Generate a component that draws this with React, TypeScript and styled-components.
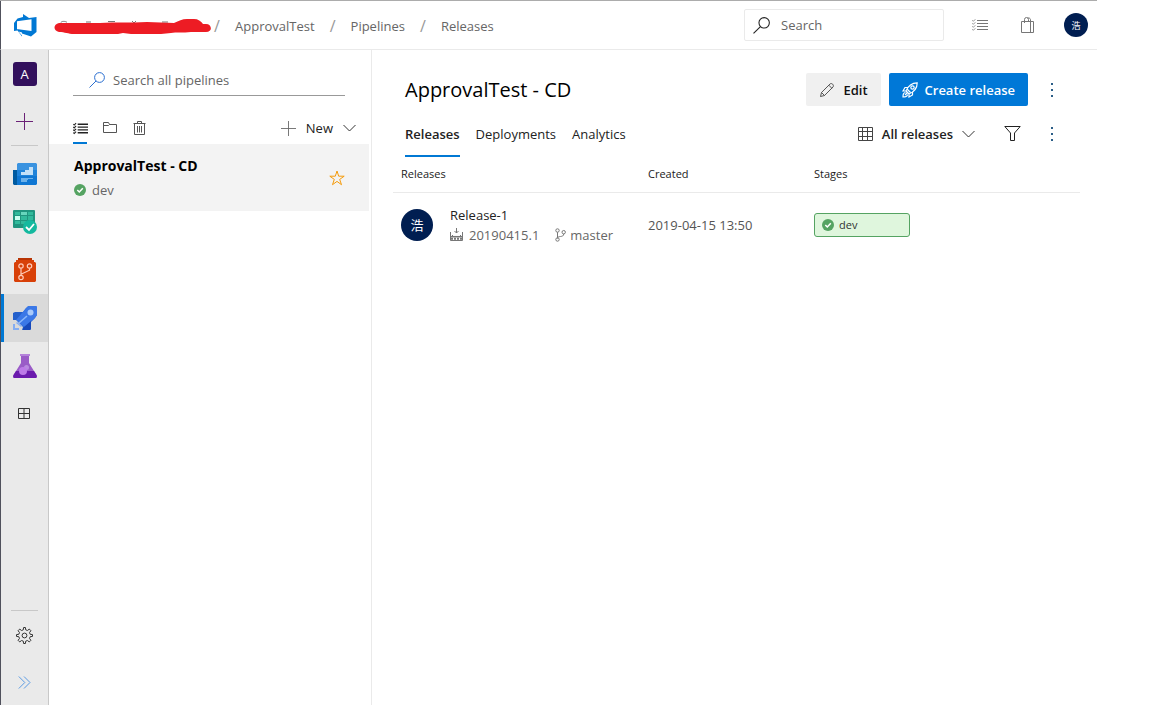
import React from 'react';
import styled, { createGlobalStyle, css } from 'styled-components';

const GlobalStyle = createGlobalStyle`
  *, *::before, *::after { box-sizing: border-box; }
  body { margin: 0; background: #fff; }
  body, button, input, table {
    font-family: "Open Sans", "Noto Sans", "Noto Sans CJK SC", sans-serif;
    font-size: 13px;
    line-height: 20px;
    color: #222;
  }
  button { border: 0; padding: 0; background: none; cursor: pointer; }
  svg { display: block; flex: none; }
  a { color: inherit; text-decoration: none; }
  h1, h2, p, ul, ol { margin: 0; padding: 0; list-style: none; }
`;

const Page = styled.div`
  display: flex;
  flex-direction: column;
  min-height: 100vh;
  margin-right: 55px;
  border-top: 1px solid #acacac;
`;

const TopBar = styled.header`
  display: flex;
  align-items: center;
  height: 49px;
  padding: 0 9px 0 13px;
  border-left: 1px solid #50515c;
  border-bottom: 1px solid #eaeaea;
`;

const Breadcrumbs = styled.ol`
  display: flex;
  flex: 1;
  align-items: center;
  margin-left: 17px;
  padding-top: 2px;
  color: #666;
`;

const Crumb = styled.li`
  display: flex;
  align-items: center;
`;

const Slash = styled.span`
  width: 36px;
  text-align: center;
  font-size: 16px;
  color: #999;
`;

const HiddenName = styled.a`
  margin-right: -13px;
`;

const GlobalSearch = styled.label`
  display: flex;
  align-items: center;
  gap: 11px;
  width: 200px;
  height: 32px;
  margin-right: 12px;
  padding: 0 8px;
  border: 1px solid #eaeaea;
  border-radius: 2px;
`;

const SearchInput = styled.input`
  flex: 1;
  min-width: 0;
  padding: 0;
  border: 0;
  outline: 0;
  background: none;
  &::placeholder { color: #666; opacity: 1; }
`;

const IconButton = styled.button<{ $width?: number }>`
  display: flex;
  align-items: center;
  justify-content: center;
  width: ${(p) => p.$width ?? 32}px;
  height: 32px;
`;

const Avatar = styled.span<{ $size: number }>`
  display: flex;
  flex: none;
  align-items: center;
  justify-content: center;
  width: ${(p) => p.$size}px;
  height: ${(p) => p.$size}px;
  border-radius: 50%;
  background: #001e51;
  color: #fff;
  font-family: "Noto Sans CJK SC", sans-serif;
  font-size: ${(p) => (p.$size > 24 ? 13 : 9)}px;
  line-height: 1;
`;

const ProfileButton = styled.button`
  margin-left: 12px;
`;

const Body = styled.div`
  display: flex;
  flex: 1;
`;

const SideBar = styled.nav`
  display: flex;
  flex: none;
  flex-direction: column;
  align-items: stretch;
  width: 49px;
  border-left: 1px solid #50515c;
  border-right: 1px solid #c8c8c8;
  background: #eaeaea;
`;

const SideItem = styled.a<{ $active?: boolean; $height?: number }>`
  display: flex;
  align-items: center;
  justify-content: center;
  height: ${(p) => p.$height ?? 48}px;
  ${(p) =>
    p.$active &&
    css`
      background: #dadada;
      box-shadow: inset 3px 0 #0078d4;
    `}
`;

const SideRule = styled.hr<{ $bottom?: boolean }>`
  width: 27px;
  height: 1px;
  margin: ${(p) => (p.$bottom ? 'auto 10px 0' : '0 10px 4px')};
  border: 0;
  background: #c8c8c8;
`;

const ProjectTile = styled.span`
  width: 24px;
  height: 24px;
  border-radius: 3px;
  background: #32105c;
  color: #fff;
  line-height: 24px;
  text-align: center;
`;

const ListPane = styled.section`
  flex: none;
  width: 323px;
  border-right: 1px solid #eaeaea;
`;

const PipelineSearch = styled.label`
  display: flex;
  align-items: center;
  gap: 8px;
  height: 32px;
  margin: 14px 26px 16px 24px;
  padding-left: 16px;
  border-bottom: 1px solid #999;
`;

const ListTools = styled.div`
  display: flex;
  gap: 16px;
  height: 32px;
  padding: 0 15px 0 24px;
`;

const ViewButton = styled.button<{ $active?: boolean }>`
  display: flex;
  align-items: center;
  width: 14px;
  box-shadow: ${(p) => (p.$active ? 'inset 0 -2px #0078d4' : 'none')};
`;

const NewButton = styled.button`
  display: flex;
  align-items: center;
  gap: 10px;
  margin-left: auto;
  font-weight: 500;
`;

const PipelineItem = styled.article`
  display: flex;
  align-items: center;
  justify-content: space-between;
  height: 67px;
  margin-right: 2px;
  padding: 0 24px 0 25px;
  background: #f3f3f3;
`;

const PipelineName = styled.h2`
  font-size: 14px;
  font-weight: 700;
  line-height: 24px;
  color: #000;
`;

const StatusLine = styled.p`
  display: flex;
  align-items: center;
  gap: 6px;
  line-height: 24px;
  color: #666;
`;

const Main = styled.main`
  flex: 1;
  min-width: 0;
  padding: 23px 17px 0 21px;
`;

const TitleRow = styled.div`
  display: flex;
  align-items: center;
  gap: 8px;
  height: 33px;
  padding: 0 12px;
`;

const Title = styled.h1`
  flex: 1;
  font-size: 20px;
  font-weight: 500;
  line-height: 32px;
  color: #000;
`;

const ActionButton = styled.button<{ $primary?: boolean }>`
  display: flex;
  align-items: center;
  gap: ${(p) => (p.$primary ? 7 : 8)}px;
  height: 33px;
  padding: 0 13px;
  border-radius: 2px;
  font-weight: 600;
  color: ${(p) => (p.$primary ? '#fff' : '#111')};
  background: ${(p) => (p.$primary ? '#0078d7' : '#f0f0f0')};
`;

const TabRow = styled.div`
  display: flex;
  align-items: center;
  gap: 8px;
  height: 45px;
  margin-top: 6px;
  padding: 0 12px 2px;
`;

const Tabs = styled.div`
  display: flex;
  flex: 1;
  align-self: flex-start;
  gap: 16px;
  height: 45px;
`;

const Tab = styled.button<{ $active?: boolean }>`
  padding-bottom: 2px;
  font-weight: ${(p) => (p.$active ? 600 : 400)};
  box-shadow: ${(p) => (p.$active ? 'inset 0 -2px #0078d4' : 'none')};
`;

const FilterButton = styled.button`
  display: flex;
  align-items: center;
  gap: 9px;
  padding-right: 13px;
  font-weight: 600;
`;

const ReleaseTable = styled.table`
  width: 100%;
  table-layout: fixed;
  border-collapse: separate;
  border-spacing: 0;
`;

const HeadCell = styled.th<{ $width?: number }>`
  width: ${(p) => (p.$width ? `${p.$width}px` : 'auto')};
  height: 36px;
  padding: 0 8px 2px;
  border-bottom: 1px solid #eaeaea;
  font-size: 11px;
  font-weight: 400;
  line-height: 16px;
  text-align: left;
`;

const Cell = styled.td`
  height: 63px;
  padding: 0 8px;
  color: #555;
`;

const ReleaseInfo = styled.div`
  display: flex;
  align-items: center;
  gap: 17px;
`;

const ReleaseName = styled.a`
  display: block;
  color: #222;
`;

const ReleaseMeta = styled.div`
  display: flex;
  gap: 16px;
  color: #666;
`;

const MetaItem = styled.span<{ $gap: number }>`
  display: flex;
  align-items: center;
  gap: ${(p) => p.$gap}px;
`;

const StageBadge = styled.a`
  display: flex;
  align-items: center;
  gap: 5px;
  width: 96px;
  height: 24px;
  padding: 0 7px;
  border: 1px solid #55a362;
  border-radius: 3px;
  background: #dff6dd;
  font-size: 11px;
  color: #333;
`;

const DevOpsLogo = () => (
  <svg width="23" height="23" viewBox="0 0 23 23">
    <path fill="#0078d4" d="M0 9 3.500 4.500 9 3V0l6 4 7.500-1V18L17 22.500l-9-3v3L3.500 16.500 0 17Z" />
    <path fill="#fff" d="M3 7.200 17.500 5.300V17L4.300 15.200H3ZM4.500 17.500 8 18.500v3Z" />
  </svg>
);

const Scribble = () => (
  <svg width="158" height="15" viewBox="0 0 158 15" role="img" aria-label="Organization">
    <path d="M7 3.500C7 2 12 2 13 3.500M32 3h5M54 2.500h7M78 2l2 2 2-2M108 3h6" fill="none" stroke="#777" />
    <path
      fill="#ed1c24"
      d="M5 4H46c15-1 30 0 47-1l27 1C125 2 128 0 133 0h7c4 0 7 2 9 5h3c6 0 7 8 0 8h-15c-8 1-15 0-20 1l-10 1H77l-8-1-5 1H20C14 15 11 13 5 13-1 12-1 5 5 4Z"
    />
  </svg>
);

const SearchIcon = ({ color, size = 16 }: { color: string; size?: number }) => (
  <svg width={size} height={size} viewBox="0 0 16 16" fill="none" stroke={color}>
    <circle cx="10.500" cy="5.500" r="4.900" />
    <path d="M7 9 .5 15.500" />
  </svg>
);

const ChecklistIcon = ({ color, size, bold }: { color: string; size: number; bold?: boolean }) => (
  <svg width={size} height={size} viewBox="0 0 16 16" fill="none" stroke={color} strokeWidth={bold ? 1.5 : 1}>
    <path d="M5 3.500h11M5 6.500h11M5 9.500h11M5 12.500h11" />
    <path strokeWidth={bold ? 1.2 : 0.8} d="m.3 3.300 1 1 2-2M.3 6.300l1 1 2-2M.3 9.300l1 1 2-2M.3 12.300l1 1 2-2" />
  </svg>
);

const BagIcon = () => (
  <svg width="16" height="18" viewBox="0 0 16 18" fill="none" stroke="#777">
    <path d="M1.500 5.500h12v11h-12ZM10.500 5.500v11M4.500 7V3.500a2 2 0 0 1 4 0V5.500M7.500 2.200a2 2 0 0 1 3 1.300V7" />
  </svg>
);

const PlusIcon = ({ color, size }: { color: string; size: number }) => (
  <svg width={size} height={size} viewBox="0 0 17 17" fill="none" stroke={color}>
    <path d="M8.500 0v17M0 8.500h17" />
  </svg>
);

const BoardsOverviewIcon = () => (
  <svg width="24" height="24" viewBox="0 0 24 24">
    <path fill="#005ba1" d="M0 8h5v15H1l-1-1Z" />
    <path fill="#3a93e0" d="M4 2l1-1h18l1 1v8H4Z" />
    <path fill="#1f83d9" d="M4 8h20v6H4Z" />
    <path fill="#0f77d3" d="M4 14h20v8l-1 1H4Z" />
    <path fill="#c3e1f8" d="M8 10h4V8h4V5h4v8H8Z" />
    <path fill="#6bb1ea" d="M8 16h12v1h-5v1H8ZM8 18h6v2H8Z" />
  </svg>
);

const BoardsIcon = () => (
  <svg width="24" height="25" viewBox="0 0 24 25">
    <rect width="22" height="18" rx="1" fill="#20957f" />
    <path fill="#31ba9c" d="M2 2h5v3H2ZM15 2h5v3h-5ZM8 6h6v4H8ZM15 6h5v4h-5ZM2 11h5v3H2ZM8 11h5v3H8Z" />
    <path fill="#67d6bd" d="M8 2h6v3H8Z" />
    <path fill="#c8fff0" d="M2 6h5v4H2Z" />
    <circle cx="17" cy="17" r="7" fill="#14b99f" />
    <path d="m13 17 3 3 5-6" fill="none" stroke="#fff" strokeWidth="1.800" />
  </svg>
);

const ReposIcon = () => (
  <svg width="22" height="24" viewBox="0 0 22 24">
    <path fill="#b83404" d="M4 0h14v3H4Z" />
    <path fill="#d84008" d="M2 2h18v2h1l1 1v18l-1 1H1l-1-1V5l1-1h1Z" />
    <g fill="none" stroke="#ffcbb9" strokeWidth="1.200">
      <circle cx="7" cy="8" r="2.200" />
      <circle cx="15.500" cy="8" r="2.200" />
      <circle cx="7" cy="19.500" r="2.200" />
      <path d="M7 10.200v7M15.500 10.200v2l-8.500 4" />
    </g>
  </svg>
);

const PipelinesIcon = () => (
  <svg width="24" height="24" viewBox="0 0 24 24">
    <path fill="#2460cc" d="M0 7 2 6h8l3-4 3-2h7l1 1v8l-2 3-4 4v7l-1 1H9l-2-5-7-5Z" />
    <path fill="#3b78e7" d="M15 0h8l1 1v8l-3 4-10 8-8-7Z" />
    <path fill="#1749ba" d="m18 15-8 7v2h7l1-1Z" />
    <path stroke="#8ab8fb" strokeWidth="1.600" d="m6 17 8-7" />
    <circle cx="17.500" cy="6.500" r="3" fill="#a9cafb" />
    <path fill="#dadada" d="m0 14 3 0 7 7-1 3H0Z" />
    <path fill="#84adf2" d="M0 18h2v4h4v2H0ZM4 16l5 4-1 1-5-4Z" />
  </svg>
);

const TestPlansIcon = () => (
  <svg width="24" height="24" viewBox="0 0 24 24">
    <path fill="#9a5cc7" d="M8 1h8v8l7.500 12c.8 2 0 3-1.500 3H2C.5 24-.3 23 .5 21L8 9Z" />
    <path fill="#6b1bad" d="M3 17h18l2.500 4c.8 2 0 3-1.500 3H2C.5 24-.3 23 .5 21Z" />
    <path fill="#b583da" d="M7 0h10v2H7Z" />
    <circle cx="13.500" cy="13.500" r="2.500" fill="#b98ae0" />
    <circle cx="10" cy="17" r="4" fill="#bd7ae8" />
  </svg>
);

const ArtifactsIcon = () => (
  <svg width="14" height="12" viewBox="0 0 14 12" fill="none" stroke="#333">
    <path d="M.5.5h11v10h-11ZM6 .5v10M.5 5.500h11" />
  </svg>
);

const GearIcon = () => (
  <svg width="17" height="17" viewBox="0 0 17 17" fill="none" stroke="#333">
    <path d="m7.300 2.800.3-2.300h1.800l.3 2.300 1.700.7 1.900-1.400 1.600 1.600-1.400 1.900.7 1.700 2.300.3v1.800l-2.300.3-.7 1.700 1.400 1.900-1.600 1.600-1.900-1.400-1.700.7-.3 2.300H7.600l-.3-2.300-1.700-.7-1.900 1.400-1.600-1.600 1.400-1.900-.7-1.700-2.300-.3V7.600l2.300-.3.7-1.700-1.400-1.900 1.600-1.600 1.900 1.400Z" />
    <circle cx="8.500" cy="8.500" r="2.400" />
  </svg>
);

const ExpandIcon = () => (
  <svg width="13" height="13" viewBox="0 0 13 13" fill="none" stroke="#5b9ae3">
    <path d="m.8.5 6 6-6 6M6 .5l6 6-6 6" />
  </svg>
);

const FolderIcon = () => (
  <svg width="14" height="14" viewBox="0 0 14 14" fill="none" stroke="#555">
    <path d="M.5 11.500v-10h5l1 2h7v8ZM.5 4.500h5l1-1" />
  </svg>
);

const TrashIcon = () => (
  <svg width="13" height="14" viewBox="0 0 13 14" fill="none" stroke="#555">
    <path d="M.5 2.500h12M4.500 2V.5h4V2M1.500 3v10.500h10V3M4.500 5v6.500M6.500 5v6.500M8.500 5v6.500" />
  </svg>
);

const ChevronIcon = () => (
  <svg width="13" height="8" viewBox="0 0 13 8" fill="none" stroke="#333">
    <path d="m.5 1 6 6 6-6" />
  </svg>
);

const StarIcon = () => (
  <svg width="16" height="16" viewBox="0 0 16 16" fill="none" stroke="#f59b0b">
    <path d="m8 1 1.700 5.200h5.500L10.700 9.400l1.800 5.300L8 11.400l-4.500 3.300 1.800-5.300L.8 6.200h5.500Z" />
  </svg>
);

const SuccessIcon = () => (
  <svg width="12" height="12" viewBox="0 0 12 12" role="img" aria-label="Succeeded">
    <circle cx="6" cy="6" r="6" fill="#55a362" />
    <path d="m3.300 6 2 2 3.500-3.700" fill="none" stroke="#fff" strokeWidth="1.500" />
  </svg>
);

const PencilIcon = () => (
  <svg width="16" height="16" viewBox="0 0 16 16" fill="none" stroke="#444" strokeWidth=".9">
    <path d="m1.500 14.500 1-4L11 2c1.600-1.500 4.400 1 3 3L5.500 13.500ZM9.800 3.200l3 3M2.500 10.500l3 3" />
  </svg>
);

const RocketIcon = () => (
  <svg width="16" height="16" viewBox="0 0 16 16" fill="none" stroke="#fff" strokeWidth="1.200">
    <path d="M4 9C6 4 9 .8 15.200.8 15.200 7 12 10 7 12ZM6 5.500H3L1 9h3M10.500 10v3L7 15v-3M5.500 7.500l3 3" />
    <circle cx="10.500" cy="5.500" r="1.700" />
    <path d="m6 10-3 3M3.500 10.500c-2 0-2.500 2-2.500 4.500 2.500 0 4.500-.5 4.500-2.500" />
  </svg>
);

const MoreIcon = () => (
  <svg width="2" height="14" viewBox="0 0 2 14" fill="#2b5d87">
    <path d="M0 0h2v2H0ZM0 6h2v2H0ZM0 12h2v2H0Z" />
  </svg>
);

const GridIcon = () => (
  <svg width="15" height="14" viewBox="0 0 15 14" fill="none" stroke="#444">
    <path d="M.5.5h14v13H.5ZM4.500.5v13M9.500.5v13M.5 4.500h14M.5 9.500h14" />
  </svg>
);

const FunnelIcon = () => (
  <svg width="17" height="15" viewBox="0 0 17 15" fill="none" stroke="#222">
    <path d="M.8.500h15.400L10.500 7v7.500h-4V7Z" />
  </svg>
);

const BuildIcon = () => (
  <svg width="13" height="13" viewBox="0 0 13 13" fill="none" stroke="#777">
    <path d="M6.500 0v5M4.500 3l2 2 2-2M.5 4v8.500h12V4M2.500 7v2M10.500 7v2" />
    <path strokeWidth="1.500" d="M1 8.700h11" />
    <path strokeWidth="2" strokeDasharray="2 1" d="M1 10.800h11" />
  </svg>
);

const BranchIcon = () => (
  <svg width="11" height="14" viewBox="0 0 11 14" fill="none" stroke="#777">
    <circle cx="2.500" cy="2.500" r="1.700" />
    <circle cx="8.700" cy="4.200" r="1.700" />
    <circle cx="2.500" cy="11.500" r="1.700" />
    <path d="M2.500 4.200v5.600M8.700 6c0 2-1.500 2.300-3.200 2.500-1.700.2-3 .5-3 2" />
  </svg>
);

export default function App() {
  return (
    <>
      <GlobalStyle />
      <Page>
        <TopBar>
          <a href="#home" aria-label="Azure DevOps"><DevOpsLogo /></a>
          <Breadcrumbs>
            <Crumb><HiddenName href="#org"><Scribble /></HiddenName></Crumb>
            <Crumb><Slash>/</Slash><a href="#project">ApprovalTest</a></Crumb>
            <Crumb><Slash>/</Slash><a href="#pipelines">Pipelines</a></Crumb>
            <Crumb><Slash>/</Slash><a href="#releases">Releases</a></Crumb>
          </Breadcrumbs>
          <GlobalSearch>
            <SearchIcon color="#222" size={17} />
            <SearchInput type="text" placeholder="Search" aria-label="Search" />
          </GlobalSearch>
          <IconButton $width={48} aria-label="Work items"><ChecklistIcon color="#777" size={16} /></IconButton>
          <IconButton $width={48} aria-label="Marketplace"><BagIcon /></IconButton>
          <ProfileButton aria-label="Profile"><Avatar $size={24}>浩</Avatar></ProfileButton>
        </TopBar>

        <Body>
          <SideBar aria-label="Project">
            <SideItem href="#project" $height={47}><ProjectTile>A</ProjectTile></SideItem>
            <SideItem href="#add" aria-label="Add"><PlusIcon color="#6b2277" size={17} /></SideItem>
            <SideRule />
            <SideItem href="#overview" aria-label="Overview"><BoardsOverviewIcon /></SideItem>
            <SideItem href="#boards" aria-label="Boards"><BoardsIcon /></SideItem>
            <SideItem href="#repos" aria-label="Repos"><ReposIcon /></SideItem>
            <SideItem href="#pipelines" aria-label="Pipelines" $active><PipelinesIcon /></SideItem>
            <SideItem href="#tests" aria-label="Test Plans"><TestPlansIcon /></SideItem>
            <SideItem href="#extensions" aria-label="Extensions"><ArtifactsIcon /></SideItem>
            <SideRule $bottom />
            <SideItem href="#settings" aria-label="Project settings"><GearIcon /></SideItem>
            <SideItem href="#expand" aria-label="Expand" $height={46}><ExpandIcon /></SideItem>
          </SideBar>

          <ListPane>
            <PipelineSearch>
              <SearchIcon color="#2b6fd0" />
              <SearchInput type="text" placeholder="Search all pipelines" aria-label="Search all pipelines" />
            </PipelineSearch>
            <ListTools>
              <ViewButton $active aria-label="List"><ChecklistIcon color="#222" size={15} bold /></ViewButton>
              <ViewButton aria-label="Folders"><FolderIcon /></ViewButton>
              <ViewButton aria-label="Deleted"><TrashIcon /></ViewButton>
              <NewButton><PlusIcon color="#666" size={15} />New<ChevronIcon /></NewButton>
            </ListTools>
            <PipelineItem>
              <div>
                <PipelineName>ApprovalTest - CD</PipelineName>
                <StatusLine><SuccessIcon />dev</StatusLine>
              </div>
              <button aria-label="Favorite"><StarIcon /></button>
            </PipelineItem>
          </ListPane>

          <Main>
            <TitleRow>
              <Title>ApprovalTest - CD</Title>
              <ActionButton><PencilIcon />Edit</ActionButton>
              <ActionButton $primary><RocketIcon />Create release</ActionButton>
              <IconButton aria-label="More actions"><MoreIcon /></IconButton>
            </TitleRow>
            <TabRow>
              <Tabs role="tablist">
                <Tab role="tab" aria-selected="true" $active>Releases</Tab>
                <Tab role="tab" aria-selected="false">Deployments</Tab>
                <Tab role="tab" aria-selected="false">Analytics</Tab>
              </Tabs>
              <FilterButton><GridIcon />All releases<ChevronIcon /></FilterButton>
              <IconButton aria-label="Filter"><FunnelIcon /></IconButton>
              <IconButton aria-label="More options"><MoreIcon /></IconButton>
            </TabRow>
            <ReleaseTable>
              <thead>
                <tr>
                  <HeadCell $width={247}>Releases</HeadCell>
                  <HeadCell $width={166}>Created</HeadCell>
                  <HeadCell>Stages</HeadCell>
                </tr>
              </thead>
              <tbody>
                <tr>
                  <Cell>
                    <ReleaseInfo>
                      <Avatar $size={32}>浩</Avatar>
                      <div>
                        <ReleaseName href="#release-1">Release-1</ReleaseName>
                        <ReleaseMeta>
                          <MetaItem $gap={6}><BuildIcon />20190415.1</MetaItem>
                          <MetaItem $gap={4}><BranchIcon />master</MetaItem>
                        </ReleaseMeta>
                      </div>
                    </ReleaseInfo>
                  </Cell>
                  <Cell>2019-04-15 13:50</Cell>
                  <Cell><StageBadge href="#dev"><SuccessIcon />dev</StageBadge></Cell>
                </tr>
              </tbody>
            </ReleaseTable>
          </Main>
        </Body>
      </Page>
    </>
  );
}
